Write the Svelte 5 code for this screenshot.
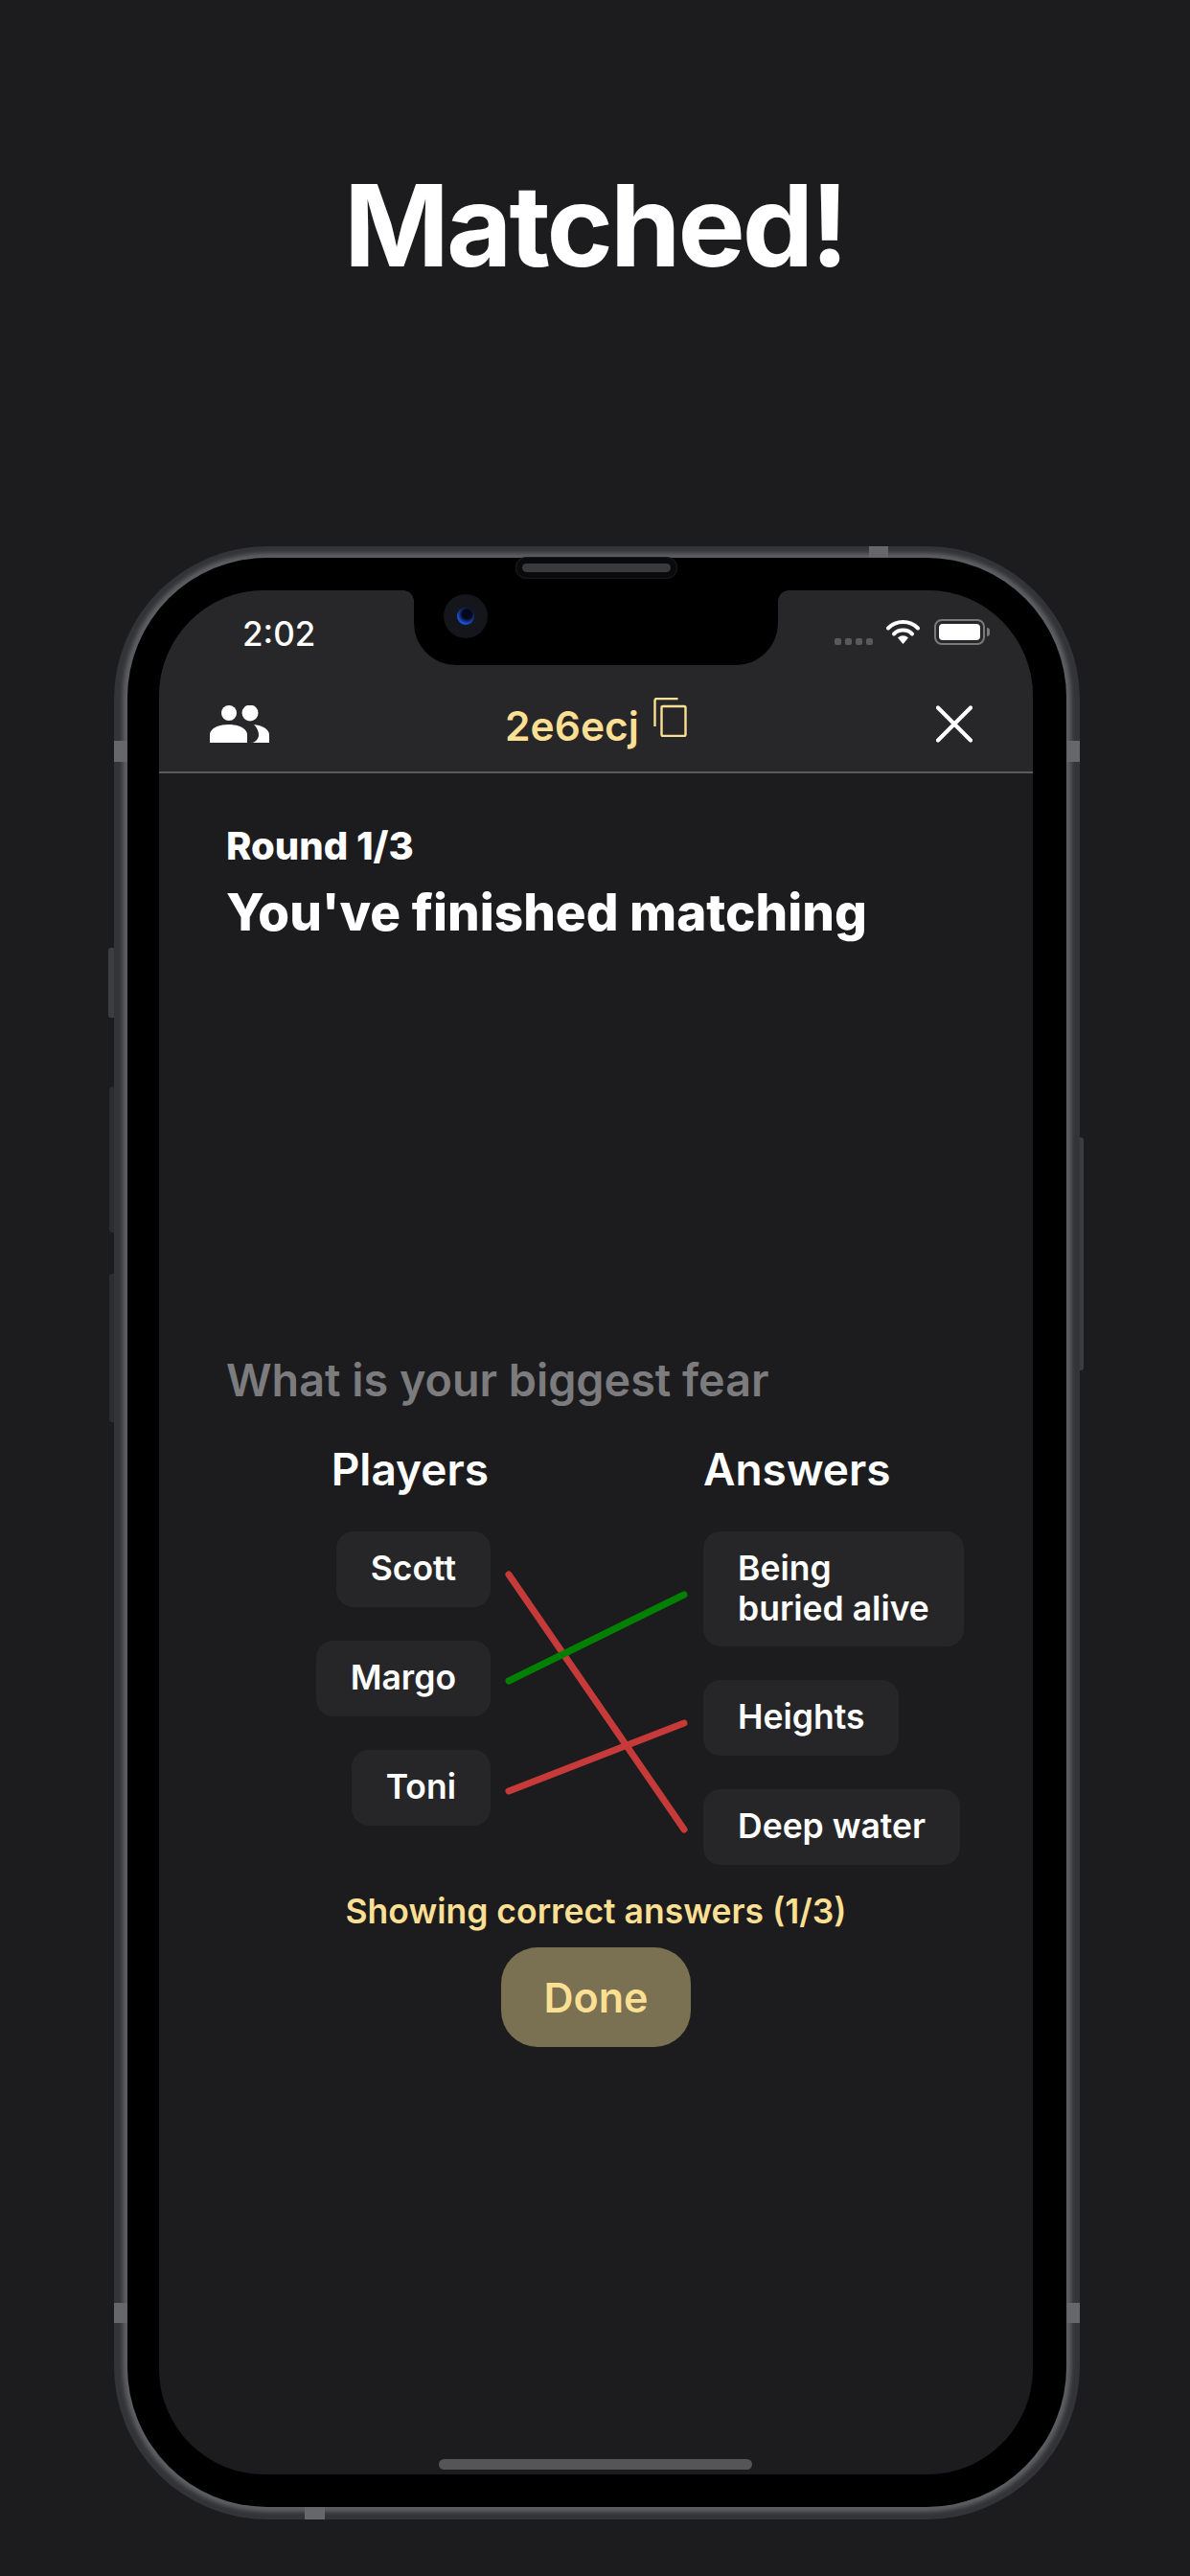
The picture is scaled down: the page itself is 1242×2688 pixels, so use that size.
<script lang="ts">
  const players = ['Scott', 'Margo', 'Toni'];
  const answers = ['Being\nburied alive', 'Heights', 'Deep water'];

  // matching lines, y is measured from the top of the first chip
  const links = [
    { x1: 0, y1: 45, x2: 183, y2: 311, color: '#c73a3a' },
    { x1: 0, y1: 156, x2: 183, y2: 66, color: '#008000' },
    { x1: 0, y1: 271, x2: 183, y2: 200, color: '#c73a3a' },
  ];
</script>

<div class="page">
  <h1>Matched!</h1>

  <div class="phone">
    <span class="btn silent"></span>
    <span class="btn vol-up"></span>
    <span class="btn vol-down"></span>
    <span class="btn power"></span>

    <div class="bezel">
      <div class="speaker"></div>
      <div class="notch">
        <div class="camera"><div class="lens"></div></div>
      </div>

      <div class="screen">
        <header>
          <div class="status">
            <span class="time">2:02</span>
            <div class="status-right">
              <div class="signal"><i></i><i></i><i></i><i></i></div>
              <svg class="wifi" width="35" height="26" viewBox="0 0 35 26">
                <path d="M2 9.500a22 22 0 0 1 31 0" fill="none" stroke="#fff" stroke-width="4" stroke-linecap="round" />
                <path d="M8 15.500a13.500 13.500 0 0 1 19 0" fill="none" stroke="#fff" stroke-width="4" stroke-linecap="round" />
                <path d="M12 19.500a8 8 0 0 1 11 0L17.500 26z" fill="#fff" />
              </svg>
              <div class="battery"><div class="charge"></div></div>
            </div>
          </div>
          <div class="nav">
            <svg class="people" width="62" height="39" viewBox="0 0 62 39">
              <circle cx="20" cy="8" r="8" fill="#fff" />
              <circle cx="42" cy="8" r="8.500" fill="#fff" />
              <path d="M0 39v-8c0-7 9-11 19.500-11S39 24 39 31v8z" fill="#fff" />
              <path d="M44 39h18v-8c0-6-7-10-16-11 3 3 5 7 5 11 0 4-4 8-7 8z" fill="#fff" />
            </svg>
            <div class="code">
              <span>2e6ecj</span>
              <svg width="35" height="41" viewBox="0 0 35 41" fill="none" stroke="#fbdf93" stroke-width="2.400">
                <path d="M1.500 30V3a2 2 0 0 1 2-2h22" />
                <rect x="8.500" y="9" width="25" height="31" rx="1.500" />
              </svg>
            </div>
            <svg class="close" width="38" height="39" viewBox="0 0 38 39">
              <path d="M2 2.500l34 34M36 2.500l-34 34" stroke="#fff" stroke-width="4.200" stroke-linecap="round" />
            </svg>
          </div>
        </header>

        <main>
          <div class="round">Round 1/3</div>
          <div class="title">You've finished matching</div>

          <div class="question">What is your biggest fear</div>

          <div class="match">
            <div class="col col-left">
              <div class="col-head">Players</div>
              {#each players as p}
                <div class="chip">{p}</div>
              {/each}
            </div>
            <svg class="lines" width="183" height="350" viewBox="0 0 183 350">
              {#each links as l}
                <line x1={l.x1} y1={l.y1} x2={l.x2} y2={l.y2} stroke={l.color} stroke-width="7" stroke-linecap="round" />
              {/each}
            </svg>
            <div class="col col-right">
              <div class="col-head">Answers</div>
              {#each answers as a}
                <div class="chip answer">{a}</div>
              {/each}
            </div>
          </div>

          <div class="showing">Showing correct answers (1/3)</div>
          <button class="done">Done</button>
        </main>

        <div class="home"></div>
      </div>
    </div>

    <span class="band band-top"></span>
    <span class="band band-bottom"></span>
    <span class="band band-left"></span>
    <span class="band band-right"></span>
    <span class="band band-left-low"></span>
    <span class="band band-right-low"></span>
  </div>
</div>

<style>
  :global(body) {
    margin: 0;
    background: #1c1c1e;
  }

  .page {
    width: 1242px;
    height: 2688px;
    box-sizing: border-box;
    background: #1c1c1e;
    font-family: Inter, "Liberation Sans", sans-serif;
    color: #fff;
    padding-top: 160px;
    overflow: hidden;
  }

  h1 {
    margin: 0;
    height: 150px;
    line-height: 150px;
    text-align: center;
    font-size: 118px;
    font-weight: 700;
    letter-spacing: -3px;
  }

  .phone {
    position: relative;
    box-sizing: border-box;
    width: 1008px;
    height: 2059px;
    margin: 260px 0 0 119px;
    padding: 12px 14px 13px;
    border-radius: 160px;
    background: #333437;
  }

  .btn {
    position: absolute;
    background: #2c2d30;
  }
  .silent { left: -6px; width: 6px; top: 419px; height: 73px; border-radius: 3px 0 0 3px; background: #3c3d40; }
  .vol-up { left: -5px; width: 5px; top: 564px; height: 152px; border-radius: 3px 0 0 3px; }
  .vol-down { left: -5px; width: 5px; top: 759px; height: 155px; border-radius: 3px 0 0 3px; }
  .power { right: -4px; width: 4px; top: 617px; height: 243px; border-radius: 0 3px 3px 0; background: #3c3d40; }

  .band {
    position: absolute;
    background: #66676b;
  }
  .band-top { left: 788px; top: 0; width: 20px; height: 12px; }
  .band-bottom { left: 199px; bottom: 0; width: 21px; height: 13px; }
  .band-left { left: 0; top: 203px; width: 14px; height: 22px; }
  .band-right { right: 0; top: 203px; width: 14px; height: 22px; }
  .band-left-low { left: 0; top: 1833px; width: 14px; height: 21px; }
  .band-right-low { right: 0; top: 1833px; width: 14px; height: 21px; }

  .bezel {
    position: relative;
    box-sizing: border-box;
    height: 100%;
    padding: 34px 35px 34px 33px;
    border-radius: 146px;
    background: #000;
    box-shadow: 0 0 4px 5px #5e5f63;
  }

  .speaker {
    position: absolute;
    left: 412px;
    top: 6px;
    width: 155px;
    height: 9px;
    border-radius: 5px;
    background: #3a3a3c;
    box-shadow: 0 0 0 6px #0a0a0c, 0 0 0 7px #1a1a1c;
  }

  .notch {
    position: absolute;
    left: 299px;
    top: 34px;
    width: 380px;
    height: 78px;
    border-radius: 0 0 44px 44px;
    background: #000;
    z-index: 1;
  }
  .notch::before,
  .notch::after {
    content: '';
    position: absolute;
    top: 0;
    width: 11px;
    height: 11px;
  }
  .notch::before {
    left: -11px;
    background: radial-gradient(circle at 0 100%, transparent 10.500px, #000 11px);
  }
  .notch::after {
    right: -11px;
    background: radial-gradient(circle at 100% 100%, transparent 10.500px, #000 11px);
  }

  .camera {
    position: absolute;
    left: 31px;
    top: 4px;
    width: 46px;
    height: 46px;
    border-radius: 50%;
    background: #14161c;
    display: flex;
    align-items: center;
    justify-content: center;
  }

  .lens {
    width: 18px;
    height: 18px;
    border-radius: 50%;
    background: radial-gradient(circle at 58% 38%, #05071a 32%, #1b52d6 66%);
  }

  .screen {
    position: relative;
    height: 100%;
    border-radius: 110px;
    overflow: hidden;
    background: #1c1c1e;
  }

  header {
    box-sizing: border-box;
    height: 191px;
    background: #272729;
    border-bottom: 2px solid #5a5a5c;
  }

  .status {
    display: flex;
    justify-content: space-between;
    align-items: flex-start;
    padding: 24px 50px 0 87px;
    height: 94px;
    box-sizing: border-box;
  }

  .time {
    font-size: 35px;
    line-height: 42px;
    font-weight: 500;
  }

  .status-right {
    display: flex;
    align-items: flex-start;
    padding-top: 6px;
  }

  .signal {
    display: flex;
    gap: 4px;
    margin: 20px 14px 0 0;
  }
  .signal i {
    width: 7px;
    height: 7px;
    border-radius: 2px;
    background: #5a5a5c;
  }

  .wifi {
    margin-right: 15px;
  }

  .battery {
    position: relative;
    box-sizing: border-box;
    width: 53px;
    height: 27px;
    padding: 3px;
    border: 2px solid #7a7a7c;
    border-radius: 8px;
  }
  .battery::after {
    content: '';
    position: absolute;
    right: -7px;
    top: 7px;
    width: 3px;
    height: 9px;
    border-radius: 0 3px 3px 0;
    background: #7a7a7c;
  }
  .charge {
    height: 100%;
    border-radius: 4px;
    background: #fff;
  }

  .nav {
    display: flex;
    align-items: center;
    justify-content: space-between;
    padding: 23px 63px 0 53px;
  }

  .people,
  .close {
    margin-top: -5px;
  }

  .code {
    display: flex;
    align-items: flex-start;
    gap: 15px;
    color: #fbdf93;
    font-size: 42.500px;
    font-weight: 600;
    line-height: 50px;
    padding-right: 14px;
  }
  .code svg {
    margin-top: -5px;
  }

  main {
    padding: 0 0 0 70px;
    display: flex;
    flex-direction: column;
  }

  .round {
    margin-top: 54px;
    font-size: 40px;
    line-height: 44px;
    font-weight: 800;
  }

  .title {
    margin-top: 17px;
    font-size: 53px;
    line-height: 60px;
    font-weight: 800;
  }

  .question {
    margin-top: 430px;
    font-size: 46.700px;
    line-height: 56px;
    font-weight: 600;
    color: #7c7c7e;
  }

  .match {
    display: flex;
    align-items: flex-start;
    margin-top: 37px;
    margin-left: 35px;
  }

  .col {
    display: flex;
    flex-direction: column;
    gap: 35px;
  }

  .col-left {
    width: 241px;
    align-items: flex-end;
  }

  .col-right {
    align-items: flex-start;
  }

  .col-head {
    font-size: 46px;
    line-height: 56px;
    font-weight: 600;
    margin-bottom: 2px;
  }

  .col-left .col-head {
    margin-right: 2px;
  }

  .chip {
    box-sizing: border-box;
    padding: 18px 36px;
    min-height: 79px;
    border-radius: 18px;
    background: #262628;
    font-size: 35.500px;
    line-height: 42px;
    font-weight: 600;
    white-space: pre-line;
  }

  .lines {
    margin: 93px 20px 0 19px;
    flex: none;
    overflow: visible;
  }

  .showing {
    margin-top: 26px;
    align-self: center;
    margin-left: -70px;
    color: #fbdf93;
    font-size: 35.500px;
    line-height: 42px;
    font-weight: 600;
  }

  .done {
    margin: 16px 0 0 -70px;
    align-self: center;
    width: 198px;
    height: 104px;
    border: none;
    border-radius: 38px;
    background: #7a7052;
    color: #fbdf93;
    font-family: inherit;
    font-size: 43px;
    font-weight: 600;
  }

  .home {
    position: absolute;
    left: 292px;
    bottom: 5px;
    width: 327px;
    height: 11px;
    border-radius: 6px;
    background: #555557;
  }
</style>
